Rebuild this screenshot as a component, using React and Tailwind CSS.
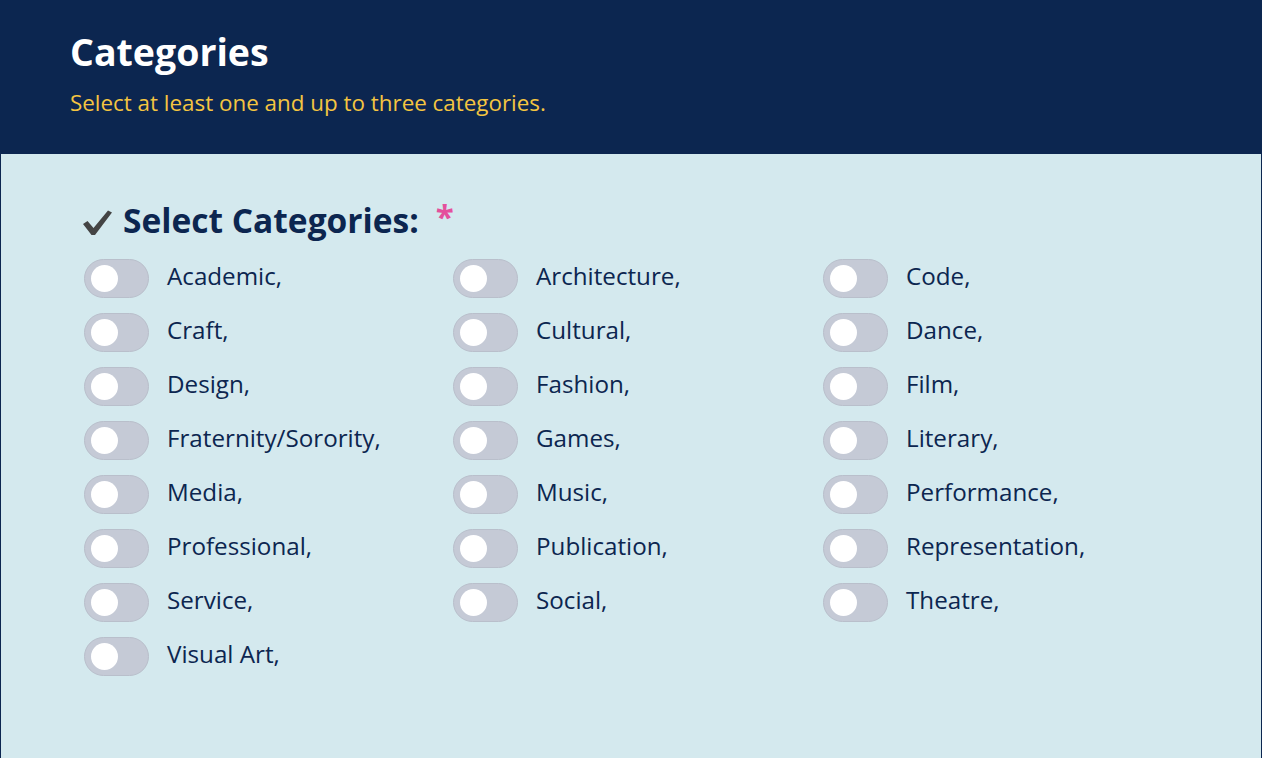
import React, { useState } from 'react';

const categories = [
  'Academic', 'Architecture', 'Code',
  'Craft', 'Cultural', 'Dance',
  'Design', 'Fashion', 'Film',
  'Fraternity/Sorority', 'Games', 'Literary',
  'Media', 'Music', 'Performance',
  'Professional', 'Publication', 'Representation',
  'Service', 'Social', 'Theatre',
  'Visual Art',
];

const Toggle = ({ on, onClick }) => (
  <button
    onClick={onClick}
    className={`relative w-[65px] h-[39px] shrink-0 rounded-full border border-[#b9bfcb] ${on ? 'bg-[#0c2650]' : 'bg-[#c5cad6]'}`}
  >
    <span
      className={`absolute top-[5px] w-[27px] h-[27px] rounded-full bg-white ${on ? 'left-[31px]' : 'left-[6px]'}`}
    />
  </button>
);

export default function App() {
  const [selected, setSelected] = useState({});

  const toggle = (name) => setSelected(s => ({ ...s, [name]: !s[name] }));

  return (
    <div className="w-[1262px] h-[758px] bg-[#0c2650] px-px" style={{ fontFamily: '"Open Sans", sans-serif' }}>
      {/* Header */}
      <div className="h-[154px] bg-[#0c2650] pl-[69px] pt-[28px]">
        <h1 className="text-[37.5px] font-bold text-white leading-[48px]">Categories</h1>
        <p className="mt-[12px] text-[22.4px] text-[#f4c541] leading-[30px]">Select at least one and up to three categories.</p>
      </div>

      {/* Body */}
      <div className="h-[604px] bg-[#d4e9ee] pl-[81px] pt-[44px]">
        <div className="flex items-center h-[44px]">
          <svg width="31" height="27" viewBox="0 0 31 27" className="mr-[10px] mt-[4px]">
            <path d="M1 15 L5.5 12 L11.5 19 L26 1.5 L30 3.5 L13 26 L9.5 26 Z" fill="#444444" />
          </svg>
          <span className="text-[33.5px] font-bold text-[#0c2650]">Select Categories:</span>
          <span className="ml-[17px] text-[33px] font-bold text-[#e4509c] leading-none -mt-[8px]">*</span>
        </div>

        <div className="grid grid-cols-[369px_370px_300px] gap-y-[15px] mt-[17px] pl-[2px]">
          {categories.map(name => (
            <label key={name} className="flex items-center gap-[18px] cursor-pointer">
              <Toggle on={!!selected[name]} onClick={() => toggle(name)} />
              <span className="text-[24.2px] text-[#0c2650] leading-[30px] -mt-[6px] whitespace-nowrap">{name},</span>
            </label>
          ))}
        </div>
      </div>
    </div>
  );
}
